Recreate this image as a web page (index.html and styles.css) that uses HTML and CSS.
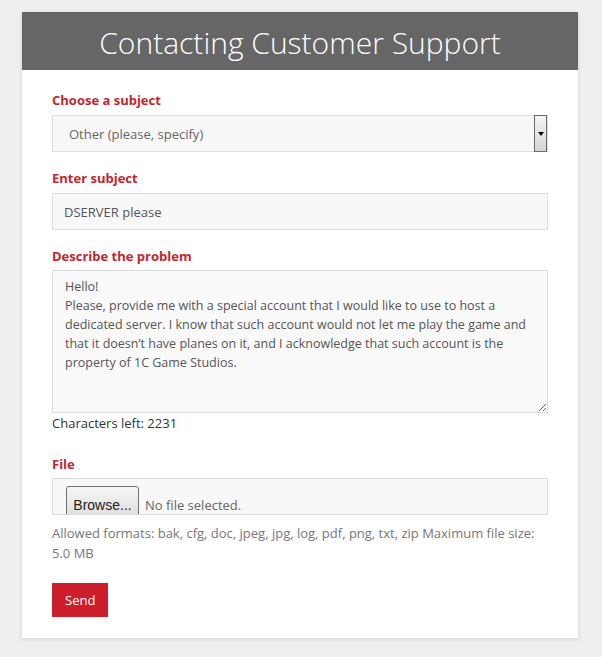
FILE: index.html
```html
<html>
	<head>
		<title>Contacting Customer Support</title>
		<link rel="stylesheet" href="styles.css">
	</head>
	<body>
		<div class="card">
			<div class="card-head">
				<h1>Contacting Customer Support</h1>
			</div>
			<form class="card-body">
				<label class="field-label">Choose a subject</label>
				<div class="select-box">
					<span class="select-text">Other (please, specify)</span>
					<span class="select-btn"><span class="arrow"></span></span>
				</div>

				<label class="field-label">Enter subject</label>
				<input class="text-input" type="text" value="DSERVER please">

				<label class="field-label label-tight">Describe the problem</label>
				<textarea class="text-area">Hello!
Please, provide me with a special account that I would like to use to host a dedicated server. I know that such account would not let me play the game and that it doesn’t have planes on it, and I acknowledge that such account is the property of 1C Game Studios.</textarea>
				<div class="chars-left">Characters left: 2231</div>

				<label class="field-label label-tight">File</label>
				<div class="file-box">
					<span class="browse-btn">Browse...</span>
					<span class="file-name">No file selected.</span>
				</div>
				<div class="hint">Allowed formats: bak, cfg, doc, jpeg, jpg, log, pdf, png, txt, zip Maximum file size: 5.0 MB</div>

				<div class="actions">
					<button type="button" class="send-btn">Send</button>
				</div>
			</form>
		</div>
	</body>
</html>
```

FILE: styles.css
```css
body {
  margin: 0;
  background: #efefef;
  font-family: "Open Sans", "Liberation Sans", sans-serif;
  font-size: 13px;
  color: #333;
}

/* Main panel */
.card {
  width: 556px;
  margin: 12px 0 0 22px;
  background: #fff;
  box-shadow: 0 1px 4px rgba(0, 0, 0, 0.12);
}

.card-head {
  background: #666666;
  height: 58px;
  box-sizing: border-box;
  padding-top: 3px;
  display: flex;
  align-items: center;
  justify-content: center;
}

.card-head h1 {
  margin: 0;
  color: #fff;
  font-weight: 300;
  font-size: 30px;
  line-height: 40px;
}

.card-body {
  margin: 0;
  padding: 20px 30px 21px 30px;
  display: flex;
  flex-direction: column;
}

.field-label {
  display: block;
  color: #c1272d;
  font-weight: 700;
  font-size: 13px;
  line-height: 20px;
  margin-bottom: 5px;
}

.label-tight {
  margin-bottom: 4px;
}

/* Fake select */
.select-box {
  height: 37px;
  box-sizing: border-box;
  border: 1px solid #dddddd;
  background: #f8f8f8;
  display: flex;
  align-items: stretch;
  margin-bottom: 16px;
}

.select-text {
  flex: 1;
  padding-left: 16px;
  display: flex;
  align-items: center;
  color: #666;
}

.select-btn {
  width: 11px;
  margin: -1px 0 -1px 0;
  border: 1px solid #6a6a6a;
  background: linear-gradient(#f4f4f4, #d6d6d6);
  display: flex;
  align-items: center;
  justify-content: center;
}

.arrow {
  width: 0;
  height: 0;
  border-left: 3px solid transparent;
  border-right: 3px solid transparent;
  border-top: 4px solid #000;
}

.text-input {
  height: 37px;
  box-sizing: border-box;
  border: 1px solid #dddddd;
  background: #f8f8f8;
  padding: 0 11px;
  font-family: inherit;
  font-size: 13px;
  color: #555;
  margin: 0 0 16px 0;
  outline: none;
}

.text-area {
  height: 143px;
  box-sizing: border-box;
  border: 1px solid #dddddd;
  background: #f9f9f9;
  padding: 6px 8px 6px 12px;
  font-family: inherit;
  font-size: 12.5px;
  line-height: 19px;
  color: #555;
  margin: 0;
  resize: vertical;
  outline: none;
}

.chars-left {
  line-height: 20px;
  color: #333;
  margin-bottom: 21px;
}

.file-box {
  height: 37px;
  box-sizing: border-box;
  border: 1px solid #dddddd;
  background: #f8f8f8;
  overflow: hidden;
  display: flex;
  align-items: flex-start;
  padding: 7px 0 0 13px;
}

.browse-btn {
  box-sizing: border-box;
  width: 73px;
  height: 34px;
  border: 1px solid #707070;
  border-radius: 3px;
  background: linear-gradient(#f6f6f6, #dcdcdc);
  font-family: "Liberation Sans", Arial, sans-serif;
  font-size: 14px;
  color: #222;
  text-align: center;
  padding-top: 10px;
}

.file-name {
  margin-left: 6px;
  padding-top: 10px;
  color: #666;
}

.hint {
  margin-top: 8px;
  line-height: 20px;
  color: #777;
}

.actions {
  margin-top: 20px;
}

.send-btn {
  background: #cc1f2b;
  color: #fff;
  border: none;
  font-family: inherit;
  font-size: 13px;
  height: 34px;
  padding: 0 13px;
  cursor: pointer;
}
```
